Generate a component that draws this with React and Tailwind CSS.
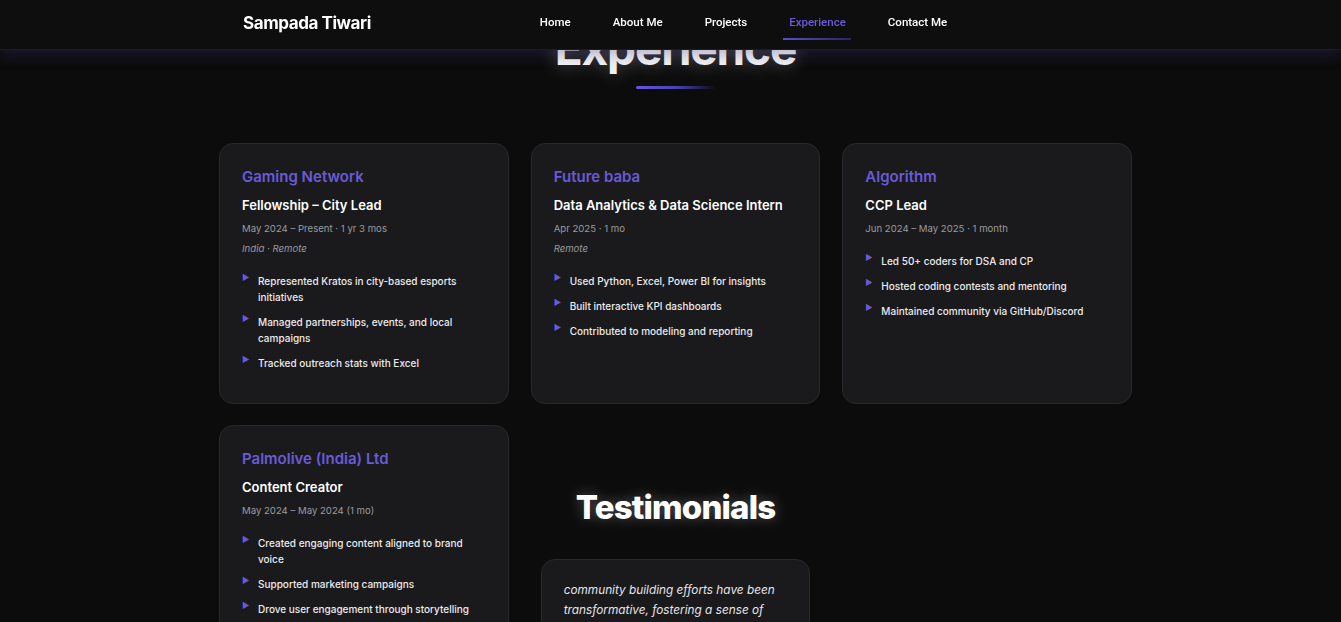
import React from 'react'

const experiences = [
  {
    company: 'Gaming Network',
    role: 'Fellowship – City Lead',
    date: 'May 2024 – Present · 1 yr 3 mos',
    place: 'India · Remote',
    points: [
      'Represented Kratos in city-based esports initiatives',
      'Managed partnerships, events, and local campaigns',
      'Tracked outreach stats with Excel',
    ],
  },
  {
    company: 'Future baba',
    role: 'Data Analytics & Data Science Intern',
    date: 'Apr 2025 · 1 mo',
    place: 'Remote',
    points: [
      'Used Python, Excel, Power BI for insights',
      'Built interactive KPI dashboards',
      'Contributed to modeling and reporting',
    ],
  },
  {
    company: 'Algorithm',
    role: 'CCP Lead',
    date: 'Jun 2024 – May 2025 · 1 month',
    points: [
      'Led 50+ coders for DSA and CP',
      'Hosted coding contests and mentoring',
      'Maintained community via GitHub/Discord',
    ],
  },
]

const palmolive = {
  company: 'Palmolive (India) Ltd',
  role: 'Content Creator',
  date: 'May 2024 – May 2024 (1 mo)',
  points: [
    'Created engaging content aligned to brand voice',
    'Supported marketing campaigns',
    'Drove user engagement through storytelling',
  ],
}

const ExpCard = ({ item, tall }) => {
  return (
    <div className={`bg-[#1a1a1c] border border-[#29292c] rounded-[14px] px-[22px] pt-[23px] pb-6 ${tall ? 'h-[261px]' : 'h-[230px]'}`}>
      <h3 className="text-[15px] font-semibold text-[#6a5ad8] leading-5">{item.company}</h3>
      <h4 className="text-[13px] font-semibold text-white mt-2 leading-5">{item.role}</h4>
      <p className="text-[9.6px] text-[#9b9b9f] mt-[6px] leading-4">{item.date}</p>
      {item.place && <p className="text-[9.6px] italic text-[#9b9b9f] mt-1 leading-4">{item.place}</p>}
      <ul className="mt-[16px] flex flex-col gap-[9px]">
        {item.points.map((p) => (
          <li key={p} className="flex items-start text-[10px] leading-4 text-[#ececee] font-medium">
            <span className="text-[#6a5ad8] text-[8px] leading-none w-[16px] shrink-0">▶</span>
            <span>{p}</span>
          </li>
        ))}
      </ul>
    </div>
  )
}

const App = () => {
  const links = ['Home', 'About Me', 'Projects', 'Experience', 'Contact Me']
  return (
    <div className="min-h-screen bg-[#0c0c0d] overflow-hidden" style={{ fontFamily: 'Inter, "Noto Sans", sans-serif' }}>
      <nav className="fixed top-0 left-0 right-0 z-10 h-[50px] bg-[#0e0e0f] shadow-[0_4px_14px_rgba(60,50,120,0.35)] border-b border-[#1d1b2a]">
        <div className="w-[913px] mx-auto translate-x-[5px] h-full flex items-center pl-6 pb-[2px]">
          <span className="text-[17px] font-bold text-white tracking-tight">Sampada Tiwari</span>
          <ul className="ml-[169px] mb-[6px] flex items-center gap-[42px]" style={{ fontFamily: 'Roboto, "Liberation Sans", sans-serif' }}>
            {links.map((l) => (
              <li key={l} className="relative">
                <span className={`text-[11.5px] font-medium ${l === 'Experience' ? 'text-[#6a5ad8]' : 'text-white'}`}>{l}</span>
                {l === 'Experience' && (
                  <span className="absolute -left-[6px] -right-[5px] top-[29px] h-[2px] bg-gradient-to-r from-[#5b4ed0] to-[#2a2660]" />
                )}
              </li>
            ))}
          </ul>
        </div>
      </nav>

      <main className="pl-[10px]">
        <section className="w-[913px] mx-auto">
          <div className="flex flex-col items-center mt-[20px]">
            <h2 className="text-[46px] font-bold text-[#f1f1f4] leading-[56px] tracking-tight [text-shadow:0_0_18px_rgba(255,255,255,0.3)]">Experience</h2>
            <div className="w-20 h-[3px] rounded-full mt-[10px] bg-gradient-to-r from-[#6654e0] via-[#4a43b8] to-transparent" />
          </div>

          <div className="grid grid-cols-3 gap-x-[22px] gap-y-[21px] mt-[54px]">
            {experiences.map((e) => (
              <ExpCard key={e.company} item={e} tall />
            ))}
            <ExpCard item={palmolive} />
            <div className="flex flex-col items-center px-[10px]">
              <h2 className="text-[33px] font-extrabold text-white mt-[62px] leading-10 tracking-tight [text-shadow:0_0_14px_rgba(255,255,255,0.3)]">Testimonials</h2>
              <div className="w-full mt-[32px] bg-[#1a1a1c] border border-[#29292c] rounded-[14px] px-[22px] pt-[20px] pb-6">
                <p className="text-[11.8px] italic text-[#e6e6ea] leading-5">
                  community building efforts have been transformative, fostering a sense of belonging and collaboration among members.
                </p>
              </div>
            </div>
          </div>
        </section>
      </main>
    </div>
  )
}

export default App
